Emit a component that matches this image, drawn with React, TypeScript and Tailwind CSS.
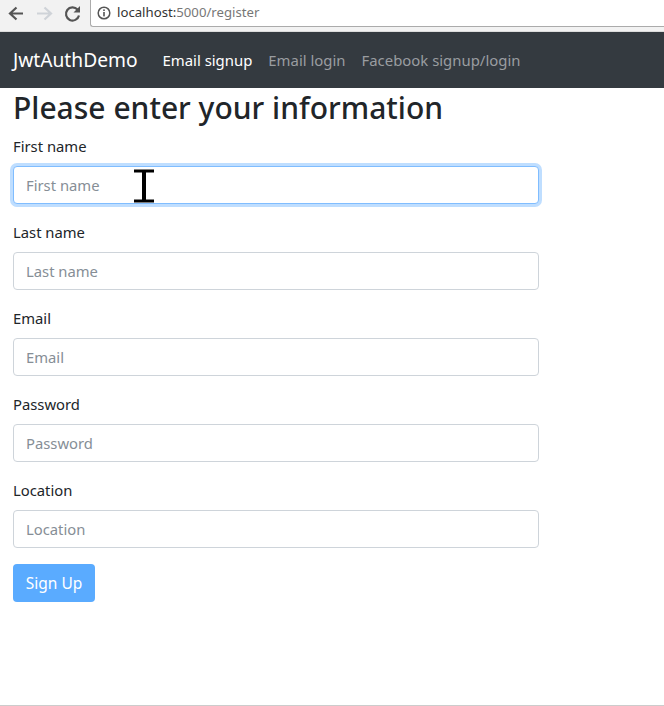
import React from 'react';

const FIELDS = ['First name', 'Last name', 'Email', 'Password', 'Location'];

function BrowserBar() {
  return (
    <div className="h-8 bg-[#f2f2f2] border-b border-[#dcdcdc] flex items-start">
      <div className="w-[90px] h-[26px] flex items-center shrink-0">
        <svg width="90" height="26" viewBox="0 0 90 26" fill="none">
          <path d="M23 13.5H10.5M16.5 7.5L10 13.5L16.5 19.5" stroke="#555555" strokeWidth="2.2" />
          <path d="M37 13.5H50.5M44.5 7.5L51 13.5L44.5 19.5" stroke="#cfd3d8" strokeWidth="2.2" />
          <path d="M77.5 9.5A6.6 6.6 0 1 0 79 15.5" stroke="#555555" strokeWidth="2.2" />
          <path d="M80 6V12.5H73.5Z" fill="#555555" />
        </svg>
      </div>
      <div className="flex-1 h-[27px] bg-white border-l border-b border-[#ababab] rounded-bl-[3px] flex items-center pl-[6px]">
        <svg width="14" height="14" viewBox="0 0 14 14" fill="none" className="shrink-0">
          <circle cx="7" cy="7" r="5.8" stroke="#555555" strokeWidth="1.5" />
          <rect x="6.2" y="6" width="1.6" height="4.4" fill="#555555" />
          <rect x="6.2" y="3.4" width="1.6" height="1.6" fill="#555555" />
        </svg>
        <span className="ml-[6px] text-[13.2px] text-[#777777]">
          <span className="text-[#333333]">localhost:</span>5000/register
        </span>
      </div>
    </div>
  );
}

function Navbar() {
  return (
    <nav className="h-14 bg-[#343a40] flex items-center px-[13px]">
      <span className="text-[19.2px] text-white mr-[25px]">JwtAuthDemo</span>
      <div className="flex gap-4 text-[14.9px]">
        <span className="text-white">Email signup</span>
        <span className="text-[#9a9da0]">Email login</span>
        <span className="text-[#9a9da0]">Facebook signup/login</span>
      </div>
    </nav>
  );
}

export default function App() {
  return (
    <div className="relative w-[664px] h-[706px] bg-white border-b border-[#cccccc] overflow-hidden text-[#212529] font-['Noto_Sans',sans-serif]">
      <BrowserBar />
      <Navbar />
      <div className="px-[13px]">
        <h1 className="text-[30px] leading-[38px] font-medium mb-2 pt-px h-[38px]">Please enter your information</h1>
        <form className="w-[526px]">
          {FIELDS.map((field, i) => (
            <div key={field} className="mb-4">
              <label className="block text-[14.8px] leading-6 mb-2">{field}</label>
              <input
                readOnly
                placeholder={field}
                className={`block w-full h-[38px] px-3 rounded text-[14.8px] bg-white border outline-none placeholder:text-[#868e96] ${i === 0 ? 'border-[#80bdff] shadow-[0_0_0_3px_#bfdeff]' : 'border-[#ced4da]'}`}
              />
            </div>
          ))}
          <button type="button" className="h-[38px] w-[82px] pt-px rounded bg-[#5aabff] text-white text-[15.5px]">
            Sign Up
          </button>
        </form>
      </div>
      {/* mouse cursor captured over the first input */}
      <svg width="22" height="36" viewBox="0 0 22 36" className="absolute left-[133px] top-[168px]">
        <path d="M1 3H21M1 33H21" stroke="#000000" strokeWidth="3" />
        <path d="M11 2V34" stroke="#000000" strokeWidth="4" />
      </svg>
    </div>
  );
}
